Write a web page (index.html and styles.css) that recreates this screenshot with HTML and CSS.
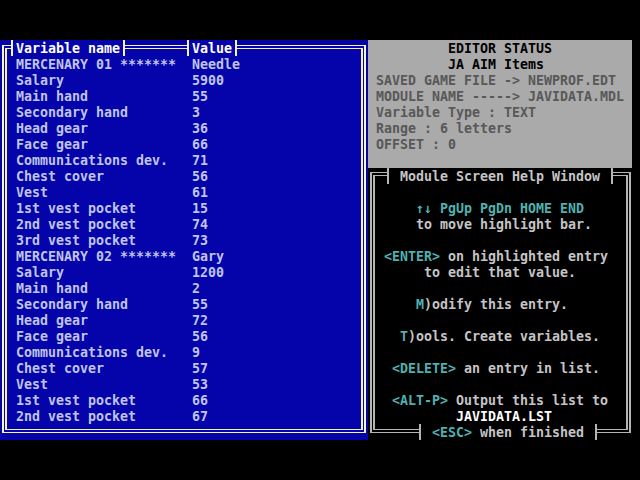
FILE: index.html
```html
<!DOCTYPE html>
<html>
<head>
<meta charset="utf-8">
<link rel="stylesheet" href="styles.css">
</head>
<body>
<div class="screen">
  <div class="left">
    <div class="frame-o"><div class="frame-i">
      <div class="rows">
        <div class="row"><span>MERCENARY 01 *******</span><span>Needle</span></div>
        <div class="row"><span>Salary</span><span>5900</span></div>
        <div class="row"><span>Main hand</span><span>55</span></div>
        <div class="row"><span>Secondary hand</span><span>3</span></div>
        <div class="row"><span>Head gear</span><span>36</span></div>
        <div class="row"><span>Face gear</span><span>66</span></div>
        <div class="row"><span>Communications dev.</span><span>71</span></div>
        <div class="row"><span>Chest cover</span><span>56</span></div>
        <div class="row"><span>Vest</span><span>61</span></div>
        <div class="row"><span>1st vest pocket</span><span>15</span></div>
        <div class="row"><span>2nd vest pocket</span><span>74</span></div>
        <div class="row"><span>3rd vest pocket</span><span>73</span></div>
        <div class="row"><span>MERCENARY 02 *******</span><span>Gary</span></div>
        <div class="row"><span>Salary</span><span>1200</span></div>
        <div class="row"><span>Main hand</span><span>2</span></div>
        <div class="row"><span>Secondary hand</span><span>55</span></div>
        <div class="row"><span>Head gear</span><span>72</span></div>
        <div class="row"><span>Face gear</span><span>56</span></div>
        <div class="row"><span>Communications dev.</span><span>9</span></div>
        <div class="row"><span>Chest cover</span><span>57</span></div>
        <div class="row"><span>Vest</span><span>53</span></div>
        <div class="row"><span>1st vest pocket</span><span>66</span></div>
        <div class="row"><span>2nd vest pocket</span><span>67</span></div>
      </div>
    </div></div>
    <div class="hdr"><span class="hcell">Variable name</span><span class="hcell hval">Value</span></div>
  </div>
  <div class="right">
    <div class="status">
      <div class="st-c">EDITOR STATUS</div>
      <div class="st-c">JA AIM Items</div>
      <div class="st">SAVED GAME FILE -&gt; NEWPROF.EDT</div>
      <div class="st">MODULE NAME -----&gt; JAVIDATA.MDL</div>
      <div class="st">Variable Type : TEXT</div>
      <div class="st">Range : 6 letters</div>
      <div class="st">OFFSET : 0</div>
    </div>
    <div class="help">
      <div class="frame-o gray"><div class="frame-i gray">
        <div class="helptext">
<div class="ln"> </div>
<div class="ln">      <span class="c">↑↓ PgUp PgDn HOME END</span></div>
<div class="ln">      to move highlight bar.</div>
<div class="ln"> </div>
<div class="ln">  <span class="c">&lt;ENTER&gt;</span> on highlighted entry</div>
<div class="ln">       to edit that value.</div>
<div class="ln"> </div>
<div class="ln">      <span class="c">M</span>)odify this entry.</div>
<div class="ln"> </div>
<div class="ln">    <span class="c">T</span>)ools. Create variables.</div>
<div class="ln"> </div>
<div class="ln">   <span class="c">&lt;DELETE&gt;</span> an entry in list.</div>
<div class="ln"> </div>
<div class="ln">   <span class="c">&lt;ALT-P&gt;</span> Output this list to</div>
<div class="ln">           <span class="w">JAVIDATA.LST</span></div>
        </div>
      </div></div>
      <div class="htitle">Module Screen Help Window</div>
      <div class="hfoot"><span class="c">&lt;ESC&gt;</span> when finished</div>
    </div>
  </div>
</div>
</body>
</html>
```

FILE: styles.css
```css
html, body {
  margin: 0;
  padding: 0;
  background: #000;
}
body {
  font-family: "DejaVu Sans Mono", "Liberation Mono", monospace;
  font-size: 13.29px;
  font-weight: bold;
  line-height: 16px;
}
.screen {
  display: flex;
  padding-top: 40px;
  height: 480px;
  box-sizing: border-box;
}
.left {
  width: 368px;
  height: 400px;
  box-sizing: border-box;
  background: #0404aa;
  position: relative;
  padding: 5px 2px 7px 2px;
  color: #c0c4ec;
}
.frame-o {
  height: 100%;
  box-sizing: border-box;
  border-style: solid;
  border-color: #f4f4c4;
  border-width: 1px 2px;
  padding: 2px 1px;
}
.frame-i {
  height: 100%;
  box-sizing: border-box;
  border-style: solid;
  border-color: #f4f4c4;
  border-width: 1px 2px;
}
.frame-o.gray, .frame-i.gray {
  border-color: #b4b4b4;
}
.rows {
  padding: 8px 0 0 9px;
}
.row {
  display: grid;
  grid-template-columns: 176px auto;
  height: 16px;
  white-space: pre;
}
.hdr {
  position: absolute;
  top: 0;
  left: 11px;
  display: flex;
  height: 16px;
}
.hcell {
  background: #0404aa;
  color: #ffffff;
  border-left: 2px solid #f4f4c4;
  border-right: 2px solid #f4f4c4;
  padding: 1px 3px 0 3px;
  height: 15px;
}
.hval {
  margin-left: 62px;
}
.right {
  width: 264px;
  display: flex;
  flex-direction: column;
}
.status {
  height: 128px;
  box-sizing: border-box;
  padding-top: 1px;
  background: #aaaaaa;
  color: #585858;
}
.st-c {
  padding-left: 80px;
  height: 16px;
  color: #000;
  white-space: pre;
}
.st {
  padding-left: 8px;
  height: 16px;
  white-space: pre;
}
.help {
  height: 272px;
  box-sizing: border-box;
  position: relative;
  background: #000;
  padding: 4px 1px 7px 2px;
  color: #c4c4c4;
}
.helptext {
  padding-top: 9px;
  margin-left: -7px;
}
.ln {
  height: 16px;
  white-space: pre;
}
.c {
  color: #4fb0b0;
}
.w {
  color: #ffffff;
}
.htitle, .hfoot {
  position: absolute;
  height: 15px;
  padding: 1px 11px 0 11px;
  background: #000;
  border-left: 2px solid #b4b4b4;
  border-right: 2px solid #b4b4b4;
  white-space: pre;
}
.htitle {
  top: 0;
  left: 19px;
}
.hfoot {
  top: 256px;
  left: 51px;
}
```
